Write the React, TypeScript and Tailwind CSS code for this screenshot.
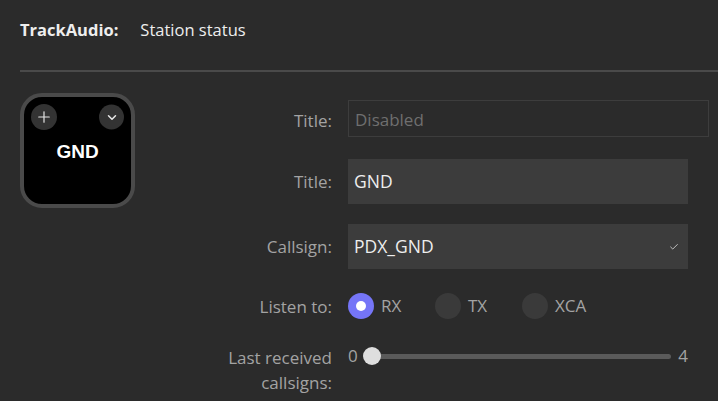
import { ChevronDown, Plus, Check } from 'lucide-react'

const font = { fontFamily: '"Open Sans", "Noto Sans", sans-serif' }

function Row({ label, children, className = '' }: { label: React.ReactNode; children: React.ReactNode; className?: string }) {
  return (
    <div className={`flex items-center gap-4 ${className}`}>
      <div className="w-[184px] shrink-0 text-right text-[17px] leading-[25px] text-[#a3a3a3]">{label}</div>
      {children}
    </div>
  )
}

function Radio({ label, checked }: { label: string; checked?: boolean }) {
  return (
    <div className="flex items-center gap-[7px] w-[87px]">
      <div className={`w-[26px] h-[26px] rounded-full flex items-center justify-center ${checked ? 'bg-[#7575f7]' : 'bg-[#3a3a3a]'}`}>
        {checked && <div className="w-[10px] h-[10px] rounded-full bg-white" />}
      </div>
      <span className="text-[17px] text-[#a3a3a3]">{label}</span>
    </div>
  )
}

export default function App() {
  return (
    <div className="w-[718px] h-[401px] bg-[#2b2b2b] overflow-hidden" style={font}>
      <div className="pl-5 pt-[19px] h-[41px] flex items-center gap-[22px] text-[16.5px] leading-[22px] text-[#eeeeee]">
        <span className="font-bold">TrackAudio:</span>
        <span>Station status</span>
      </div>
      <div className="ml-5 mt-[29px] h-[2px] bg-[#4a4a4a]" />

      <div className="flex pl-5 mt-[21px]">
        <div className="w-[115px] h-[115px] shrink-0 rounded-[22px] border-4 border-[#4a4a4a] bg-black relative flex items-center justify-center">
          <div className="absolute left-[7px] top-[20px] -translate-y-1/2 w-[26px] h-[26px] rounded-full bg-[#333333] flex items-center justify-center text-[#e5e5e5]">
            <Plus size={18} strokeWidth={1.6} />
          </div>
          <div className="absolute right-[7px] top-[20px] -translate-y-1/2 w-[25px] h-[25px] rounded-full bg-[#333333] flex items-center justify-center text-[#e5e5e5]">
            <ChevronDown size={14} strokeWidth={2.6} />
          </div>
          <span className="text-white font-bold text-[19px] mb-[-4px]" style={{ fontFamily: '"Liberation Sans", Arial, sans-serif' }}>GND</span>
        </div>

        <div className="flex flex-col mt-[7px] ml-[13px]">
          <Row label={<span className="relative top-[2px]">Title:</span>}>
            <div className="w-[361px] h-[37px] border border-[#3d3d3d] flex items-center px-[6px] pt-[3px] text-[17px] text-[#6f6f6f]">Disabled</div>
          </Row>
          <Row label="Title:" className="mt-[22px]">
            <div className="w-[340px] h-[45px] bg-[#3c3c3c] flex items-center px-[6px] text-[17.5px] text-[#eeeeee]">GND</div>
          </Row>
          <Row label="Callsign:" className="mt-[20px]">
            <div className="w-[340px] h-[45px] bg-[#3c3c3c] flex items-center justify-between px-[6px] text-[17.5px] text-[#eeeeee]">
              <span>PDX_GND</span>
              <Check size={10} strokeWidth={2.2} className="text-[#cccccc] mr-[3px]" />
            </div>
          </Row>
          <Row label="Listen to:" className="mt-[24px]">
            <div className="flex items-center">
              <Radio label="RX" checked />
              <Radio label="TX" />
              <Radio label="XCA" />
            </div>
          </Row>
          <Row label={<>Last received<br />callsigns:</>} className="mt-[26px] !items-start">
            <div className="w-[340px] flex items-center h-[22px] text-[17px] text-[#a3a3a3]">
              <span className="w-[11px]">0</span>
              <div className="flex-1 relative h-[5px] rounded-full bg-[#5a5a5a] ml-[13px] mr-[7px]">
                <div className="absolute left-[-9px] top-1/2 -translate-y-1/2 w-[18px] h-[18px] rounded-full bg-[#dedede]" />
              </div>
              <span>4</span>
            </div>
          </Row>
        </div>
      </div>
    </div>
  )
}
